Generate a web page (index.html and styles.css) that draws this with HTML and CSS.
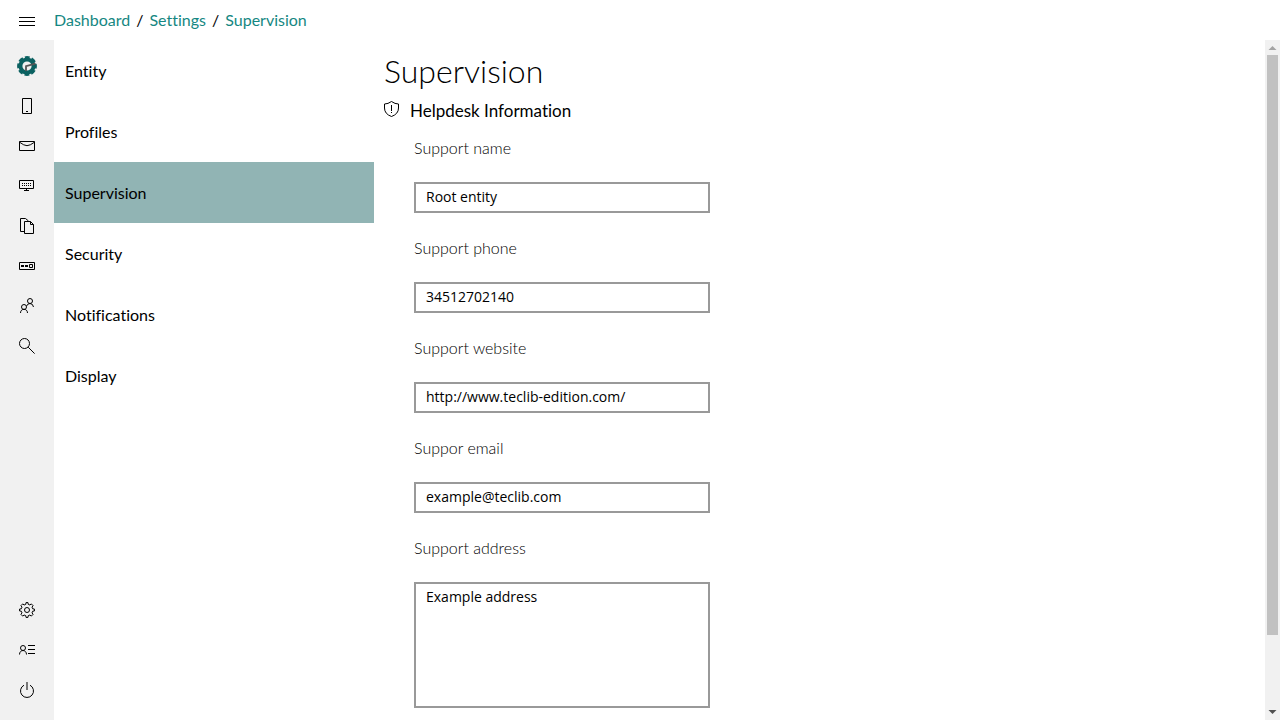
FILE: index.html
```html
<!DOCTYPE html>
<html lang="en">
<head>
<meta charset="utf-8">
<title>Supervision</title>
<meta name="viewport" content="width=device-width, initial-scale=1">
<link rel="stylesheet" href="styles.css">
</head>
<body>
<header class="topbar">
  <button class="icon-btn" type="button" aria-label="Menu"><svg class="icon" viewBox="0 0 16 16"><path d="M0 5.500h16M0 9.500h16M0 13.500h16"/></svg></button>
  <nav class="crumbs" aria-label="Breadcrumb"><a href="#">Dashboard</a><span>/</span><a href="#">Settings</a><span>/</span><a href="#">Supervision</a></nav>
</header>
<div class="shell">
  <nav class="rail" aria-label="Main">
    <div class="rail-group">
      <a class="icon-btn" href="#" aria-label="Dashboard"><svg class="logo" viewBox="0 0 20 20"><circle cx="10" cy="10" r="6.600" fill="none" stroke="#0b6161" stroke-width="4"/><circle cx="10" cy="10" r="8.700" fill="none" stroke="#0b6161" stroke-width="2.400" stroke-dasharray="4.800 2.033" stroke-dashoffset="2.400"/><path d="M9 15V10.200L18.500 7.600" fill="none" stroke="#555" stroke-width="1.800"/></svg></a>
      <a class="icon-btn" href="#" aria-label="Devices"><svg class="icon" viewBox="0 0 16 16"><path d="M3.500.5h9v15h-9zM7 13.500h2"/></svg></a>
      <a class="icon-btn" href="#" aria-label="Invitations"><svg class="icon" viewBox="0 0 16 16"><path d="M.5 3.500h15v9H.5zM.5 4.200Q5 7.600 8 7.700Q11 7.600 15.500 4.200"/></svg></a>
      <a class="icon-btn" href="#" aria-label="Fleets"><svg class="icon" viewBox="0 0 16 16"><path d="M.5 2.500h14v8H.5zM7.500 10.500v2M5 12.500h5"/><path d="M3 5.500h10M3 7.500h10" stroke-dasharray="1 1"/></svg></a>
      <a class="icon-btn" href="#" aria-label="Files"><svg class="icon" viewBox="0 0 16 16"><path d="M5 13.500H1.500V.5h5l3 2.500M5.500 3.500h6l3 3v9h-9zM11.500 3.500v3h3"/></svg></a>
      <a class="icon-btn" href="#" aria-label="Applications"><svg class="icon" viewBox="0 0 16 16"><path d="M.5 4.500h15v7H.5zM10.500 6.500h3v3h-3z"/><path d="M2 8h3M6 8h3" stroke-width="2"/></svg></a>
      <a class="icon-btn" href="#" aria-label="Users"><svg class="icon" viewBox="0 0 16 16"><circle cx="5" cy="9" r="2.500"/><circle cx="11" cy="3" r="2.500"/><path d="M1.500 15c0-5 7-5 7 0M7.600 8Q8.500 5.500 11 5.500Q14 5.700 14.500 9"/></svg></a>
      <a class="icon-btn" href="#" aria-label="Search"><svg class="icon" viewBox="0 0 16 16"><circle cx="5.500" cy="5.500" r="5"/><path d="M9.200 9.200l6.400 6.400"/></svg></a>
    </div>
    <div class="rail-group">
      <a class="icon-btn" href="#" aria-label="Settings"><svg class="icon" viewBox="0 0 16 16"><circle cx="8" cy="8" r="2.500"/><path d="M6.800 2.300L7 .6h2l.2 1.700 1.700.7 1.400-1.100 1.800 1.800L13 5.100l.7 1.700 1.700.2v2l-1.700.2-.7 1.700 1.100 1.400-1.800 1.800-1.400-1.100-1.700.7L9 15.400H7l-.2-1.700L5.100 13l-1.400 1.100-1.800-1.800L3 10.900l-.7-1.700L.6 9V7l1.700-.2L3 5.100 1.900 3.700l1.800-1.800L5.100 3z"/></svg></a>
      <a class="icon-btn" href="#" aria-label="About"><svg class="icon" viewBox="0 0 16 16"><circle cx="4" cy="6" r="2.500"/><path d="M.5 12.500c0-5.300 7-5.300 7 0M9 3.500h7M9 7.500h7M9 11.500h7"/></svg></a>
      <a class="icon-btn" href="#" aria-label="Sign out"><svg class="icon" viewBox="0 0 16 16"><path d="M5 3.200a6.500 6.500 0 1 0 6 0"/><path d="M8 0v8" stroke="#777" stroke-width="2"/></svg></a>
    </div>
  </nav>
  <div class="scroller">
    <nav class="sections" aria-label="Settings">
      <a href="#">Entity</a>
      <a href="#">Profiles</a>
      <a class="active" href="#" aria-current="page">Supervision</a>
      <a href="#">Security</a>
      <a href="#">Notifications</a>
      <a href="#">Display</a>
    </nav>
    <main class="content">
      <h1>Supervision</h1>
      <h2><svg class="icon" viewBox="0 0 16 16"><path d="M7.500.5Q4 3 .5 3V7Q.5 13 7.500 15.500Q14.500 13 14.500 7V3Q11 3 7.500.5zM7.500 4v6M7.500 11v1"/></svg>Helpdesk Information</h2>
      <form class="fields">
        <label for="name">Support name</label>
        <input id="name" type="text" value="Root entity">
        <label for="phone">Support phone</label>
        <input id="phone" type="text" value="34512702140">
        <label for="site">Support website</label>
        <input id="site" type="text" value="http://www.teclib-edition.com/">
        <label for="email">Suppor email</label>
        <input id="email" type="text" value="example@teclib.com">
        <label for="address">Support address</label>
        <textarea id="address">Example address</textarea>
      </form>
    </main>
  </div>
  <div class="scrollbar" aria-hidden="true">
    <svg class="arrow up" viewBox="0 0 15 15"><path d="M3.500 10L7.500 6L11.500 10z"/></svg>
    <div class="track"><div class="thumb"></div></div>
    <svg class="arrow down" viewBox="0 0 15 15"><path d="M3.500 5L7.500 9L11.500 5z"/></svg>
  </div>
</div>
</body>
</html>
```
FILE: styles.css
```css
* { box-sizing: border-box; }
body {
  margin: 0;
  height: 100vh;
  display: flex;
  flex-direction: column;
  background: #fff;
  color: #000;
  font: 16px/20px Lato, "Open Sans", sans-serif;
  font-variant-ligatures: none;
}
a { color: inherit; text-decoration: none; }
.topbar { display: flex; align-items: center; height: 40px; flex: none; }
.crumbs { display: flex; gap: 6px; }
.crumbs a { color: #158782; }
.icon-btn {
  display: flex;
  align-items: center;
  justify-content: center;
  width: 54px;
  height: 40px;
  padding: 0;
  border: 0;
  background: none;
}
.icon { width: 16px; height: 16px; flex: none; fill: none; stroke: #000; stroke-width: 1; }
.logo { width: 20px; height: 20px; }
.shell { display: flex; flex: 1; min-height: 0; }
.rail {
  display: flex;
  flex-direction: column;
  justify-content: space-between;
  flex: none;
  padding: 6px 0 10px;
  background: #f1f1f1;
}
.scroller {
  flex: 1;
  display: flex;
  align-items: flex-start;
  overflow-y: auto;
  scrollbar-width: none;
}
.scrollbar { display: flex; flex-direction: column; flex: none; width: 15px; background: #f1f1f1; }
.arrow { width: 15px; height: 15px; flex: none; }
.up { fill: #a3a3a3; }
.down { fill: #505050; }
.track { flex: 1; padding: 0 2px; }
.thumb { height: 89.2%; background: #c1c1c1; }
.sections { width: 320px; flex: none; }
.sections a { display: flex; align-items: center; height: 61px; padding: 0 11px; }
.sections .active { background: #91b4b4; }
.content { flex: 1; padding: 8px 10px 94px; }
h1 { margin: 0; font-size: 32px; line-height: 46px; font-weight: 300; }
h2 {
  display: flex;
  gap: 10px;
  margin: 7px 0 17px;
  font-size: 17px;
  line-height: 20px;
  font-weight: 400;
}
.fields { display: flex; flex-direction: column; width: 296px; margin-left: 30px; }
label { margin-bottom: 24px; font-weight: 300; }
input, textarea {
  display: block;
  width: 100%;
  height: 31px;
  margin: 0 0 25px;
  padding: 2px 10px 4px;
  border: 2px solid #999;
  border-radius: 0;
  background: #fff;
  color: #000;
  font: 14px/20px "Open Sans", "Noto Sans", sans-serif;
}
textarea { height: 126px; margin: 0; padding: 3px 10px; resize: none; overflow: auto; }
```
